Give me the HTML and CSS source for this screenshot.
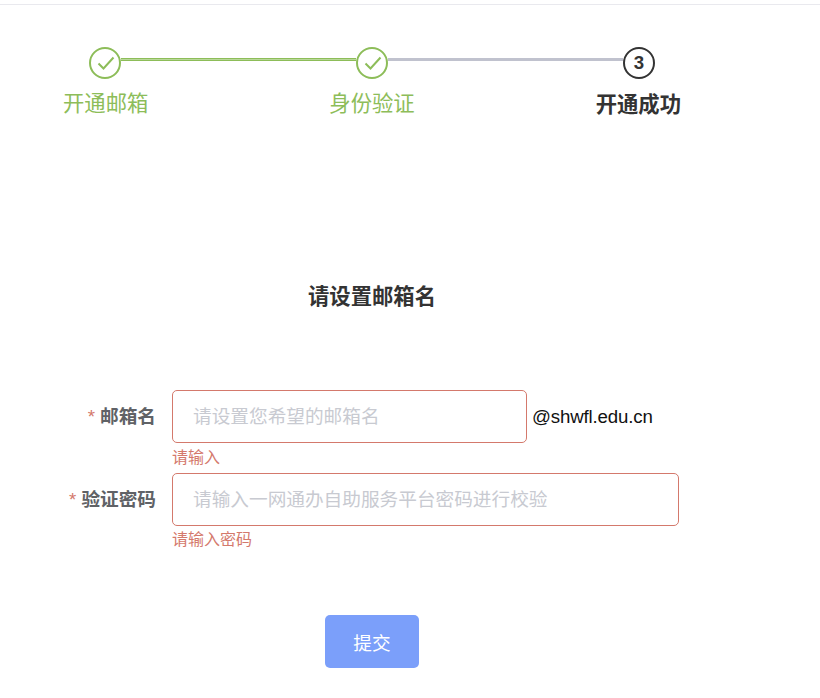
FILE: index.html
```html
<!DOCTYPE html>
<html lang="zh-CN">
<head>
  <meta charset="UTF-8">
  <meta name="viewport" content="width=device-width, initial-scale=1.0">
  <title>开通邮箱</title>
  <link rel="stylesheet" href="styles.css">
</head>
<body>
  <div class="top-line"></div>
  <div class="steps">
    <div class="step-track">
      <span class="circle done">
        <svg width="32" height="32" viewBox="0 0 32 32"><path d="M9.5 16.5l5 5 10-11" fill="none" stroke="#8dbd59" stroke-width="2"/></svg>
      </span>
      <span class="bar done"></span>
      <span class="circle done">
        <svg width="32" height="32" viewBox="0 0 32 32"><path d="M9.5 16.5l5 5 10-11" fill="none" stroke="#8dbd59" stroke-width="2"/></svg>
      </span>
      <span class="bar"></span>
      <span class="circle current">3</span>
    </div>
    <div class="step-labels">
      <span class="done-text">开通邮箱</span>
      <span class="done-text">身份验证</span>
      <span class="current-text">开通成功</span>
    </div>
  </div>
  <h2 class="title">请设置邮箱名</h2>
  <form class="form">
    <div class="form-item">
      <label class="form-label"><i>*</i>邮箱名</label>
      <div class="form-field">
        <div class="input-line">
          <input class="input short" type="text" placeholder="请设置您希望的邮箱名">
          <span class="suffix">@shwfl.edu.cn</span>
        </div>
        <div class="error">请输入</div>
      </div>
    </div>
    <div class="form-item">
      <label class="form-label"><i>*</i>验证密码</label>
      <div class="form-field">
        <input class="input long" type="password" placeholder="请输入一网通办自助服务平台密码进行校验">
        <div class="error">请输入密码</div>
      </div>
    </div>
    <button class="submit" type="button">提交</button>
  </form>
</body>
</html>
```

FILE: styles.css
```css
body {
  margin: 0;
  background: #fff;
  font-family: "Liberation Sans", "Noto Sans CJK SC", sans-serif;
  color: #333;
}
.top-line {
  height: 4px;
  border-bottom: 1px solid #e9e9ee;
}
.steps {
  width: 618px;
  margin: 42px 0 0 63px;
}
.step-track {
  display: flex;
  padding: 0 26px;
}
.circle {
  width: 32px;
  height: 32px;
  flex: none;
  box-sizing: border-box;
  border-radius: 50%;
  display: flex;
  align-items: center;
  justify-content: center;
  background: #fff;
  font-size: 18.67px;
  font-weight: bold;
}
.circle svg {
  flex: none;
}
.circle.done {
  border: 2px solid #8dbd59;
}
.circle.current {
  border: 2px solid #333;
}
.bar {
  flex: 1;
  height: 3px;
  margin-top: 11px;
  background: #c0c2ce;
}
.bar.done {
  background: #b9d89a;
  box-shadow: inset 0 1px 0 #8dbd59, inset 0 -1px 0 #8dbd59;
}
.step-labels {
  display: flex;
  justify-content: space-between;
  margin-top: 9px;
  font-size: 21.33px;
  line-height: 32px;
}
.done-text {
  color: #8dbd59;
}
.current-text {
  padding-top: 1px;
  font-weight: bold;
}
.title {
  margin: 160px 0 0;
  width: 744px;
  text-align: center;
  font-size: 21.33px;
  line-height: 32px;
  font-weight: bold;
}
.form {
  margin-top: 77px;
}
.form-item {
  display: flex;
  gap: 16px;
}
.form-label {
  width: 156px;
  text-align: right;
  font-size: 18.67px;
  line-height: 53px;
  font-weight: bold;
  color: #606266;
}
.form-label i {
  margin-right: 5px;
  font-style: normal;
  font-weight: normal;
  color: #d4796c;
}
.form-field {
  display: flex;
  flex-direction: column;
}
.input-line {
  display: flex;
  align-items: center;
  gap: 5px;
}
.input {
  height: 53px;
  box-sizing: border-box;
  padding: 0 20px;
  border: 1px solid #d4796c;
  border-radius: 5px;
  outline: none;
  font-family: inherit;
  font-size: 18.67px;
}
.input::placeholder {
  color: #c8cad1;
}
.input.short {
  width: 355px;
}
.input.long {
  width: 507px;
}
.suffix {
  font-size: 18.67px;
  letter-spacing: -0.15px;
  color: #111;
}
.error {
  height: 30px;
  font-size: 16px;
  line-height: 28px;
  color: #d4796c;
}
.input-line + .error {
  line-height: 30px;
}
.submit {
  display: block;
  width: 94px;
  height: 53px;
  margin: 59px 0 0 325px;
  border: 0;
  border-radius: 5px;
  background: #7b9ffa;
  color: #fff;
  font-family: inherit;
  font-size: 18.67px;
}
```
